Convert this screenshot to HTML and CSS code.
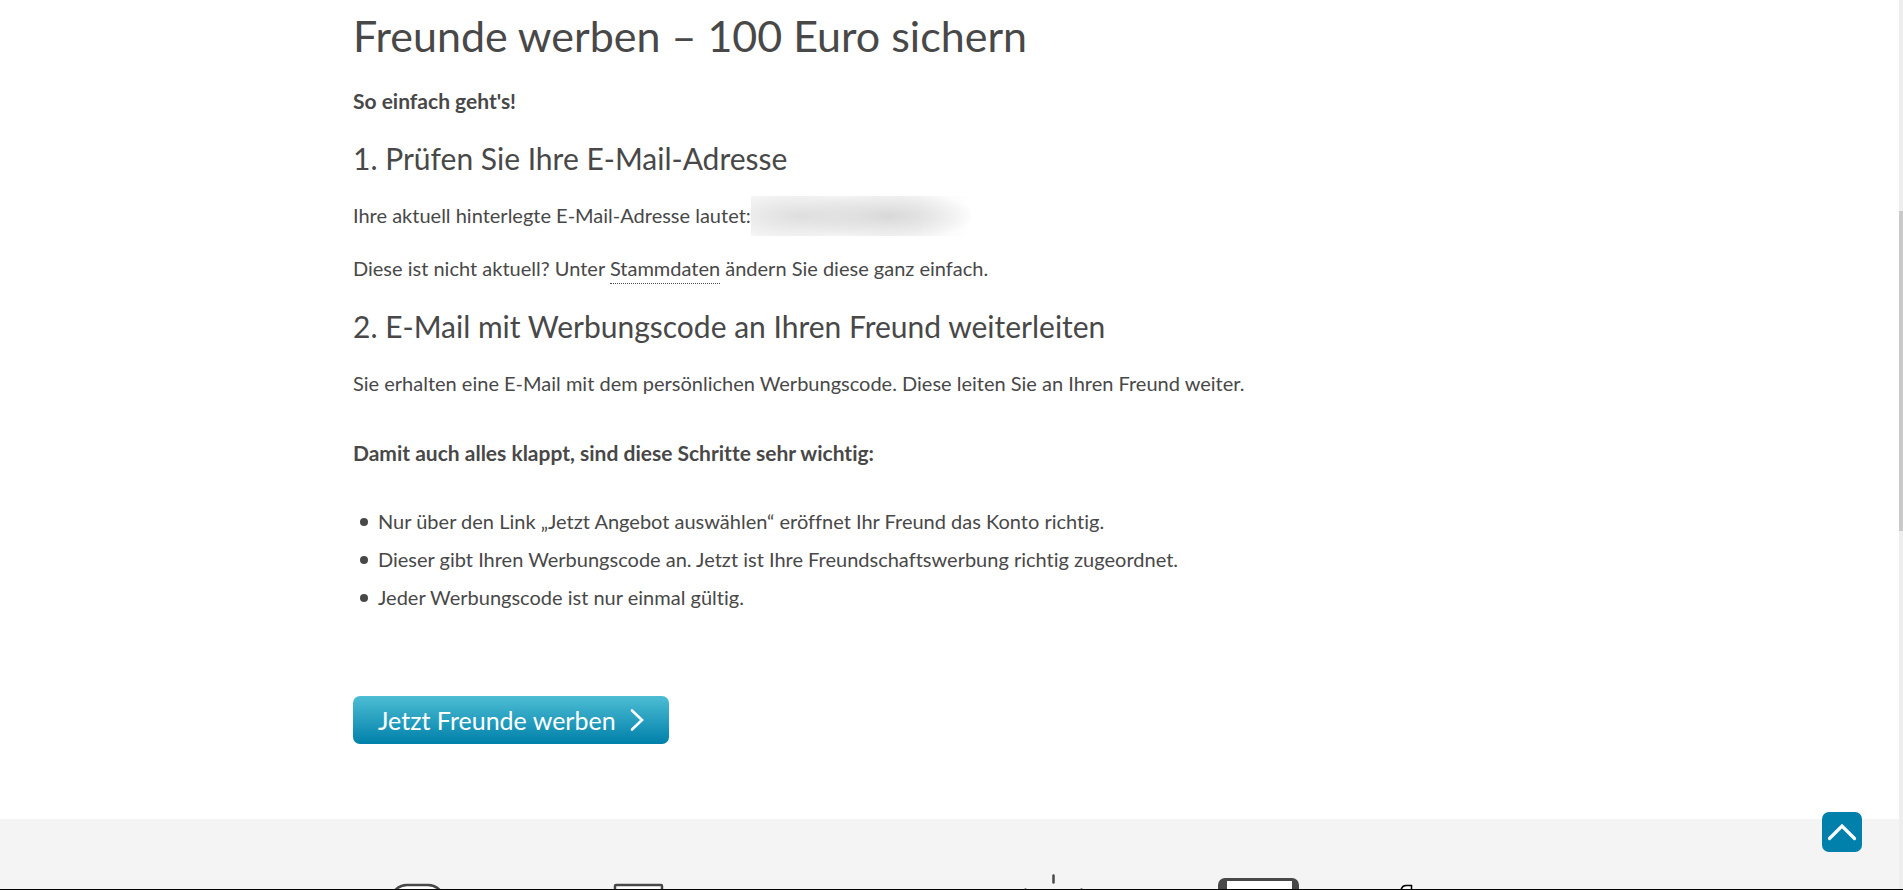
FILE: index.html
```html
<!DOCTYPE html>
<html lang="de">
<head>
  <meta charset="UTF-8" />
  <meta name="viewport" content="width=device-width, initial-scale=1" />
  <title>Freunde werben – 100 Euro sichern</title>
  <link rel="stylesheet" href="styles.css">
</head>
<body>

  <main class="container">
    <h1>Freunde werben – 100 Euro sichern</h1>
    <p><strong>So einfach geht's!</strong></p>

    <h2>1. Prüfen Sie Ihre E-Mail-Adresse</h2>
    <p class="mail-line"><span>Ihre aktuell hinterlegte E-Mail-Adresse lautet:</span><span class="mail-hidden"></span></p>
    <p>Diese ist nicht aktuell? Unter <a class="link" href="#stammdaten">Stammdaten</a> ändern Sie diese ganz einfach.</p>

    <h2>2. E-Mail mit Werbungscode an Ihren Freund weiterleiten</h2>
    <p>Sie erhalten eine E-Mail mit dem persönlichen Werbungscode. Diese leiten Sie an Ihren Freund weiter.</p>

    <p class="hint"><strong>Damit auch alles klappt, sind diese Schritte sehr wichtig:</strong></p>

    <ul class="steps">
      <li>Nur über den Link „Jetzt Angebot auswählen“ eröffnet Ihr Freund das Konto richtig.</li>
      <li>Dieser gibt Ihren Werbungscode an. Jetzt ist Ihre Freundschaftswerbung richtig zugeordnet.</li>
      <li>Jeder Werbungscode ist nur einmal gültig.</li>
    </ul>

    <button class="btn" type="button">
      <span>Jetzt Freunde werben</span>
      <svg width="14" height="24" viewBox="0 0 14 24" aria-hidden="true">
        <path d="M2 2.500 L12 12 L2 21.500" fill="none" stroke="#fff" stroke-width="2.600" stroke-linecap="round" />
      </svg>
    </button>
  </main>

  <footer class="services">
    <div class="container services-grid">
      <svg viewBox="0 0 160 60" aria-hidden="true">
        <rect x="38" y="11" width="53" height="70" rx="16" fill="#fff" stroke="#484848" stroke-width="2.500" />
      </svg>
      <svg viewBox="0 0 160 60" aria-hidden="true">
        <rect x="62" y="11" width="47" height="60" rx="1" fill="#fff" stroke="#484848" stroke-width="2.500" />
      </svg>
      <svg viewBox="0 0 160 60" aria-hidden="true"></svg>
      <svg viewBox="0 0 160 60" aria-hidden="true">
        <path d="M101.500 1.500 V8.500 M73.500 15.500 L78 22 M129.500 15.500 L125 22" fill="none" stroke="#484848" stroke-width="2.500" stroke-linecap="round" />
      </svg>
      <svg viewBox="0 0 160 60" aria-hidden="true">
        <rect x="67" y="4" width="81" height="70" rx="7" fill="#484848" />
        <rect x="76" y="7" width="65" height="60" fill="#fff" />
      </svg>
      <svg viewBox="0 0 160 60" aria-hidden="true">
        <path d="M50 20 V16 Q51 11.500 55 11.500 H60.500 V22" fill="#fff" stroke="#000" stroke-width="1.500" />
      </svg>
    </div>
  </footer>

  <a class="to-top" href="#" aria-label="Nach oben">
    <svg width="30" height="18" viewBox="0 0 30 18" aria-hidden="true">
      <path d="M2.500 15.500 L15 3 L27.500 15.500" fill="none" stroke="#fff" stroke-width="3.200" stroke-linecap="round" />
    </svg>
  </a>

  <div class="scrollbar"><div class="scrollbar-thumb"></div></div>

</body>
</html>
```

FILE: styles.css
```css
* {
  box-sizing: border-box;
}

body {
  margin: 0;
  height: 100vh;
  overflow: hidden;
  display: flex;
  flex-direction: column;
  font-family: Lato, sans-serif;
  font-size: 20px;
  line-height: 29px;
  font-variant-ligatures: none;
  color: #484848;
  background: #fff;
  border-bottom: 1px solid #000;
}

.container {
  width: 100%;
  max-width: 1197px;
  margin: 0 auto;
}

main {
  flex: none;
}

h1, h2 {
  margin: 0 0 24px;
  font-weight: normal;
}

h1 {
  margin-bottom: 22px;
  padding-top: 8px;
  font-size: 43px;
  line-height: 56px;
}

h2 {
  font-size: 30px;
  line-height: 38px;
}

p {
  margin: 0 0 24px;
}

strong {
  display: block;
  font-size: 21px;
}

.mail-line {
  display: flex;
}

/* customer address is masked */
.mail-hidden {
  width: 220px;
  margin: -5px 0 -6px;
  background:
    radial-gradient(90px 24px at 62% 50%, #d8d8d8, transparent),
    radial-gradient(80px 24px at 22% 50%, #dedede, transparent),
    linear-gradient(to right, #f5f5f5 75%, #fff 100%);
}

.link {
  color: inherit;
  text-decoration: none;
  padding-bottom: 3px;
  border-bottom: 1px dotted #484848;
}

.hint {
  margin: 40px 0;
}

.steps {
  margin: 0 0 84px;
  padding: 0 0 0 7px;
  list-style: none;
}

.steps li {
  display: flex;
  align-items: center;
  gap: 10px;
  margin-bottom: 9px;
}

.steps li::before {
  content: "";
  width: 8px;
  height: 8px;
  border-radius: 50%;
  background: #484848;
}

.btn {
  display: flex;
  align-items: center;
  gap: 14px;
  height: 48px;
  padding: 0 25px;
  border: none;
  border-radius: 7px;
  background: linear-gradient(#4dbdd4, #0080aa);
  color: #fff;
  font-family: inherit;
  font-size: 25px;
  cursor: pointer;
}

.services {
  flex: 1;
  margin-top: 75px;
  padding-top: 55px;
  overflow: hidden;
  background: #f4f4f4;
}

.services-grid {
  display: grid;
  grid-template-columns: repeat(6, 1fr);
}

.services-grid svg {
  width: 160px;
  height: 60px;
}

.to-top {
  position: fixed;
  right: 41px;
  bottom: 38px;
  display: flex;
  align-items: center;
  justify-content: center;
  width: 40px;
  height: 40px;
  border-radius: 7px;
  background: #0080aa;
}

.scrollbar {
  position: fixed;
  top: 0;
  right: 0;
  bottom: 1px;
  width: 4px;
  background: #eee;
}

.scrollbar-thumb {
  height: 36%;
  margin-top: 211px;
  background: #c9c9c9;
}
```
